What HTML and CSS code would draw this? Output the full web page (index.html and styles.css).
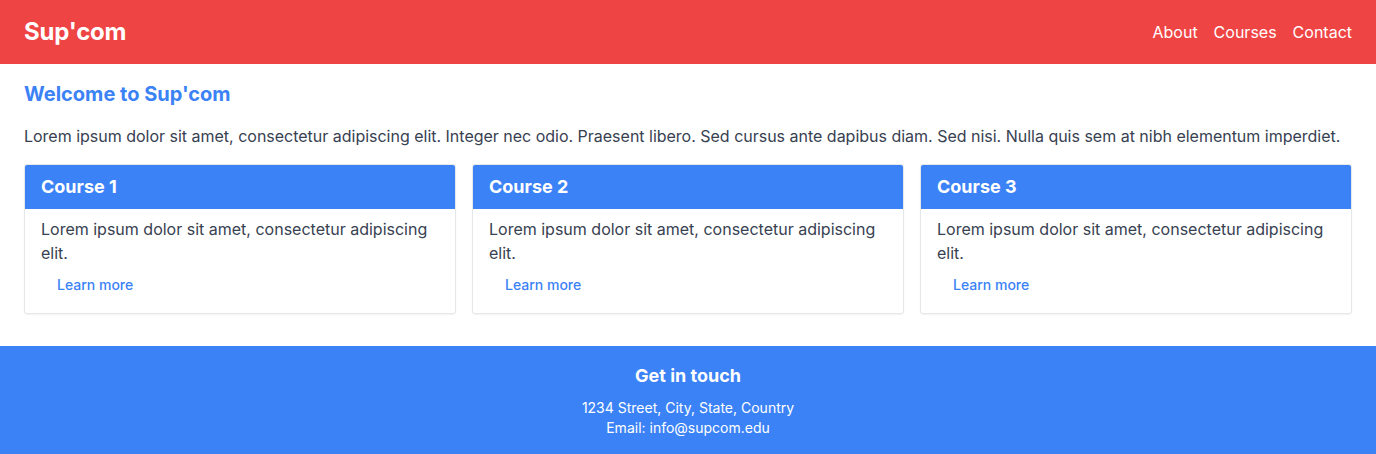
FILE: index.html
```html
<!DOCTYPE html>
<html lang="en">
<head>
<meta charset="utf-8">
<title>Sup'com</title>
<link rel="stylesheet" href="styles.css">
</head>
<body>
<header class="topbar">
  <div class="logo">Sup'com</div>
  <nav class="nav">
    <a href="#">About</a>
    <a href="#">Courses</a>
    <a href="#">Contact</a>
  </nav>
</header>
<main class="main">
  <h2 class="welcome">Welcome to Sup'com</h2>
  <p class="intro">Lorem ipsum dolor sit amet, consectetur adipiscing elit. Integer nec odio. Praesent libero. Sed cursus ante dapibus diam. Sed nisi. Nulla quis sem at nibh elementum imperdiet.</p>
  <div class="cards">
    <div class="card">
      <div class="card-head">Course 1</div>
      <div class="card-body">
        <p>Lorem ipsum dolor sit amet, consectetur adipiscing elit.</p>
        <a class="more" href="#">Learn more</a>
      </div>
    </div>
    <div class="card">
      <div class="card-head">Course 2</div>
      <div class="card-body">
        <p>Lorem ipsum dolor sit amet, consectetur adipiscing elit.</p>
        <a class="more" href="#">Learn more</a>
      </div>
    </div>
    <div class="card">
      <div class="card-head">Course 3</div>
      <div class="card-body">
        <p>Lorem ipsum dolor sit amet, consectetur adipiscing elit.</p>
        <a class="more" href="#">Learn more</a>
      </div>
    </div>
  </div>
</main>
<footer class="footer">
  <h3 class="footer-title">Get in touch</h3>
  <p class="footer-line">1234 Street, City, State, Country</p>
  <p class="footer-line">Email: info@supcom.edu</p>
</footer>
</body>
</html>
```

FILE: styles.css
```css
* { box-sizing: border-box; }
html, body { margin: 0; padding: 0; }
body {
  font-family: Inter, "Noto Sans", "Liberation Sans", sans-serif;
  color: #374151;
  background: #fff;
  font-size: 16px;
  line-height: 24px;
}
a { text-decoration: none; }
.topbar {
  background: #ef4444;
  height: 64px;
  padding: 0 24px;
  display: flex;
  align-items: center;
  justify-content: space-between;
}
.logo {
  color: #fff;
  font-size: 24px;
  line-height: 32px;
  font-weight: 700;
  letter-spacing: -0.2px;
}
.nav { display: flex; gap: 16px; }
.nav a { color: #fff; font-size: 16px; line-height: 24px; }
.main { padding: 16px 24px 32px; }
.welcome {
  margin: 0 0 16px;
  font-size: 20px;
  line-height: 28px;
  font-weight: 700;
  color: #3b82f6;
}
.intro { margin: 0 0 16px; letter-spacing: -0.01px; }
.cards {
  display: grid;
  grid-template-columns: repeat(3, 1fr);
  gap: 16px;
}
.card {
  background: #fff;
  border: 1px solid #e5e7eb;
  border-radius: 3px;
  overflow: hidden;
  box-shadow: 0 1px 2px rgba(0,0,0,0.05);
}
.card-head {
  background: #3b82f6;
  color: #fff;
  font-size: 18px;
  line-height: 28px;
  font-weight: 700;
  padding: 8px 16px;
}
.card-body { padding: 8px 16px 10px; }
.card-body p { margin: 0; }
.more {
  display: inline-block;
  margin-top: 2px;
  padding: 8px 16px;
  font-size: 14px;
  line-height: 20px;
  font-weight: 500;
  color: #3b82f6;
}
.footer {
  background: #3b82f6;
  color: #fff;
  text-align: center;
  padding: 16px 24px 16px;
}
.footer-title {
  margin: 0 0 8px;
  font-size: 18px;
  line-height: 28px;
  font-weight: 700;
}
.footer-line {
  margin: 0;
  font-size: 14px;
  line-height: 20px;
}
```
